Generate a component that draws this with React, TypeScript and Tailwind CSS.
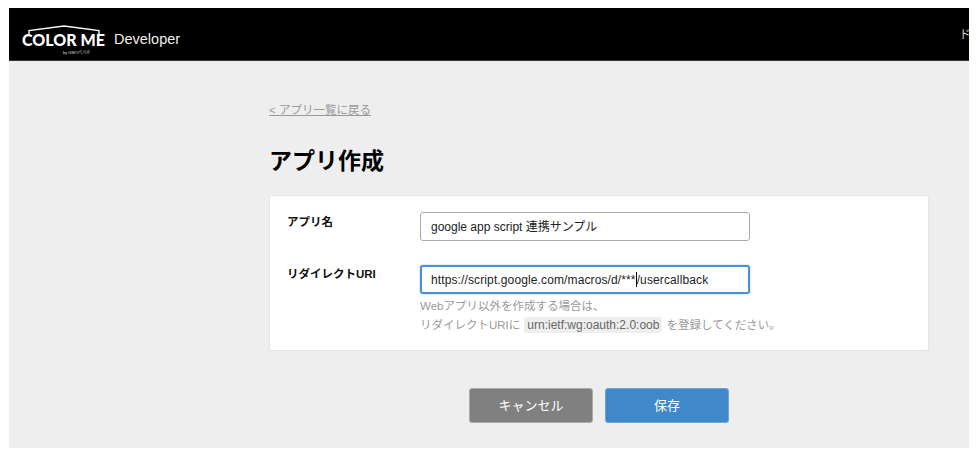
const jp = "font-['Liberation_Sans','Noto_Sans_CJK_JP',sans-serif]"

function Logo() {
    return (
        <div className="relative w-[84px] h-[40px] shrink-0 text-white">
            <svg className="absolute left-[6px] top-[11px]" width="72" height="9" viewBox="0 0 72 9" fill="none" stroke="white" strokeWidth="1.4">
                <path d="M1 9V5.5L36 1L71 5.5V9" />
            </svg>
            <span className="absolute left-0 top-[16px] text-[16px] leading-[20px] font-black font-['Lato',sans-serif] whitespace-nowrap">COLOR ME</span>
            <span className={`absolute left-[41px] top-[36px] text-[4px] leading-[5px] whitespace-nowrap text-[#ddd] ${jp}`}>by GMOペパボ</span>
        </div>
    )
}

export default function App() {
    return (
        <div className={`w-[980px] h-[456px] bg-white pt-2 pb-2 pl-[9px] pr-[11px] overflow-hidden ${jp}`}>
            <div className="h-full bg-[#eeeeee] overflow-hidden">
                {/* Header */}
                <header className="h-[53px] bg-black border-b border-[#333] flex items-center pl-[13px] pr-0 relative overflow-hidden">
                    <Logo />
                    <span className="ml-[8px] mt-[11px] text-[14.5px] text-[#eee]">Developer</span>
                    <span className="absolute right-[-2px] top-[20px] text-[12px] leading-[14px] text-[#ccc]">ド</span>
                </header>

                <main className="ml-[260px] w-[660px]">
                    <a className="block mt-[41px] text-[11.5px] leading-[16px] text-[#999] underline">&lt; アプリ一覧に戻る</a>
                    <h1 className="mt-[26px] text-[23px] leading-[34px] font-bold text-black">アプリ作成</h1>

                    <div className="mt-[17px] h-[156px] bg-white border border-[#e4e4e4] rounded-[2px] pt-[16px] pl-[17px]">
                        <div className="flex">
                            <label className="w-[133px] mt-px text-[11.5px] leading-[18px] font-bold text-[#111]">アプリ名</label>
                            <input
                                readOnly
                                value="google app script 連携サンプル"
                                className="w-[330px] h-[29px] px-[10px] pb-[2px] text-[12px] text-[#222] bg-white border border-[#aaa] rounded-[3px] outline-none"
                            />
                        </div>
                        <div className="flex mt-[24px]">
                            <label className="w-[133px] text-[11.5px] leading-[18px] font-bold text-[#111]">リダイレクトURI</label>
                            <div>
                                <div className="w-[330px] h-[29px] pl-[9px] flex items-center text-[12px] tracking-[0.12px] text-[#222] bg-white border-2 border-[#4a90d9] rounded-[3px] box-border shadow-[0_0_2px_#8fbbe8]">
                                    https://script.google.com/macros/d/***<span className="w-px h-[15px] bg-black"></span>/usercallback
                                </div>
                                <p className="mt-[3px] text-[11.5px] leading-[19px] text-[#999] whitespace-nowrap">Webアプリ以外を作成する場合は、</p>
                                <p className="text-[11.5px] leading-[19px] text-[#999] whitespace-nowrap">
                                    リダイレクトURIに
                                    <span className="mx-[4px] px-[3px] py-px rounded-[3px] bg-[#eeeeee] text-[12px] text-[#666]">urn:ietf:wg:oauth:2.0:oob</span>
                                    を登録してください。
                                </p>
                            </div>
                        </div>
                    </div>

                    {/* Buttons */}
                    <div className="mt-[37px] flex ml-[200px] gap-[12px]">
                        <button className="w-[124px] h-[35px] bg-[#808080] border border-[#aaa] rounded-[3px] text-[13px] text-white">キャンセル</button>
                        <button className="w-[124px] h-[35px] bg-[#3f88c9] border border-[#6ba3d6] rounded-[3px] text-[13px] text-white">保存</button>
                    </div>
                </main>
            </div>
        </div>
    )
}
